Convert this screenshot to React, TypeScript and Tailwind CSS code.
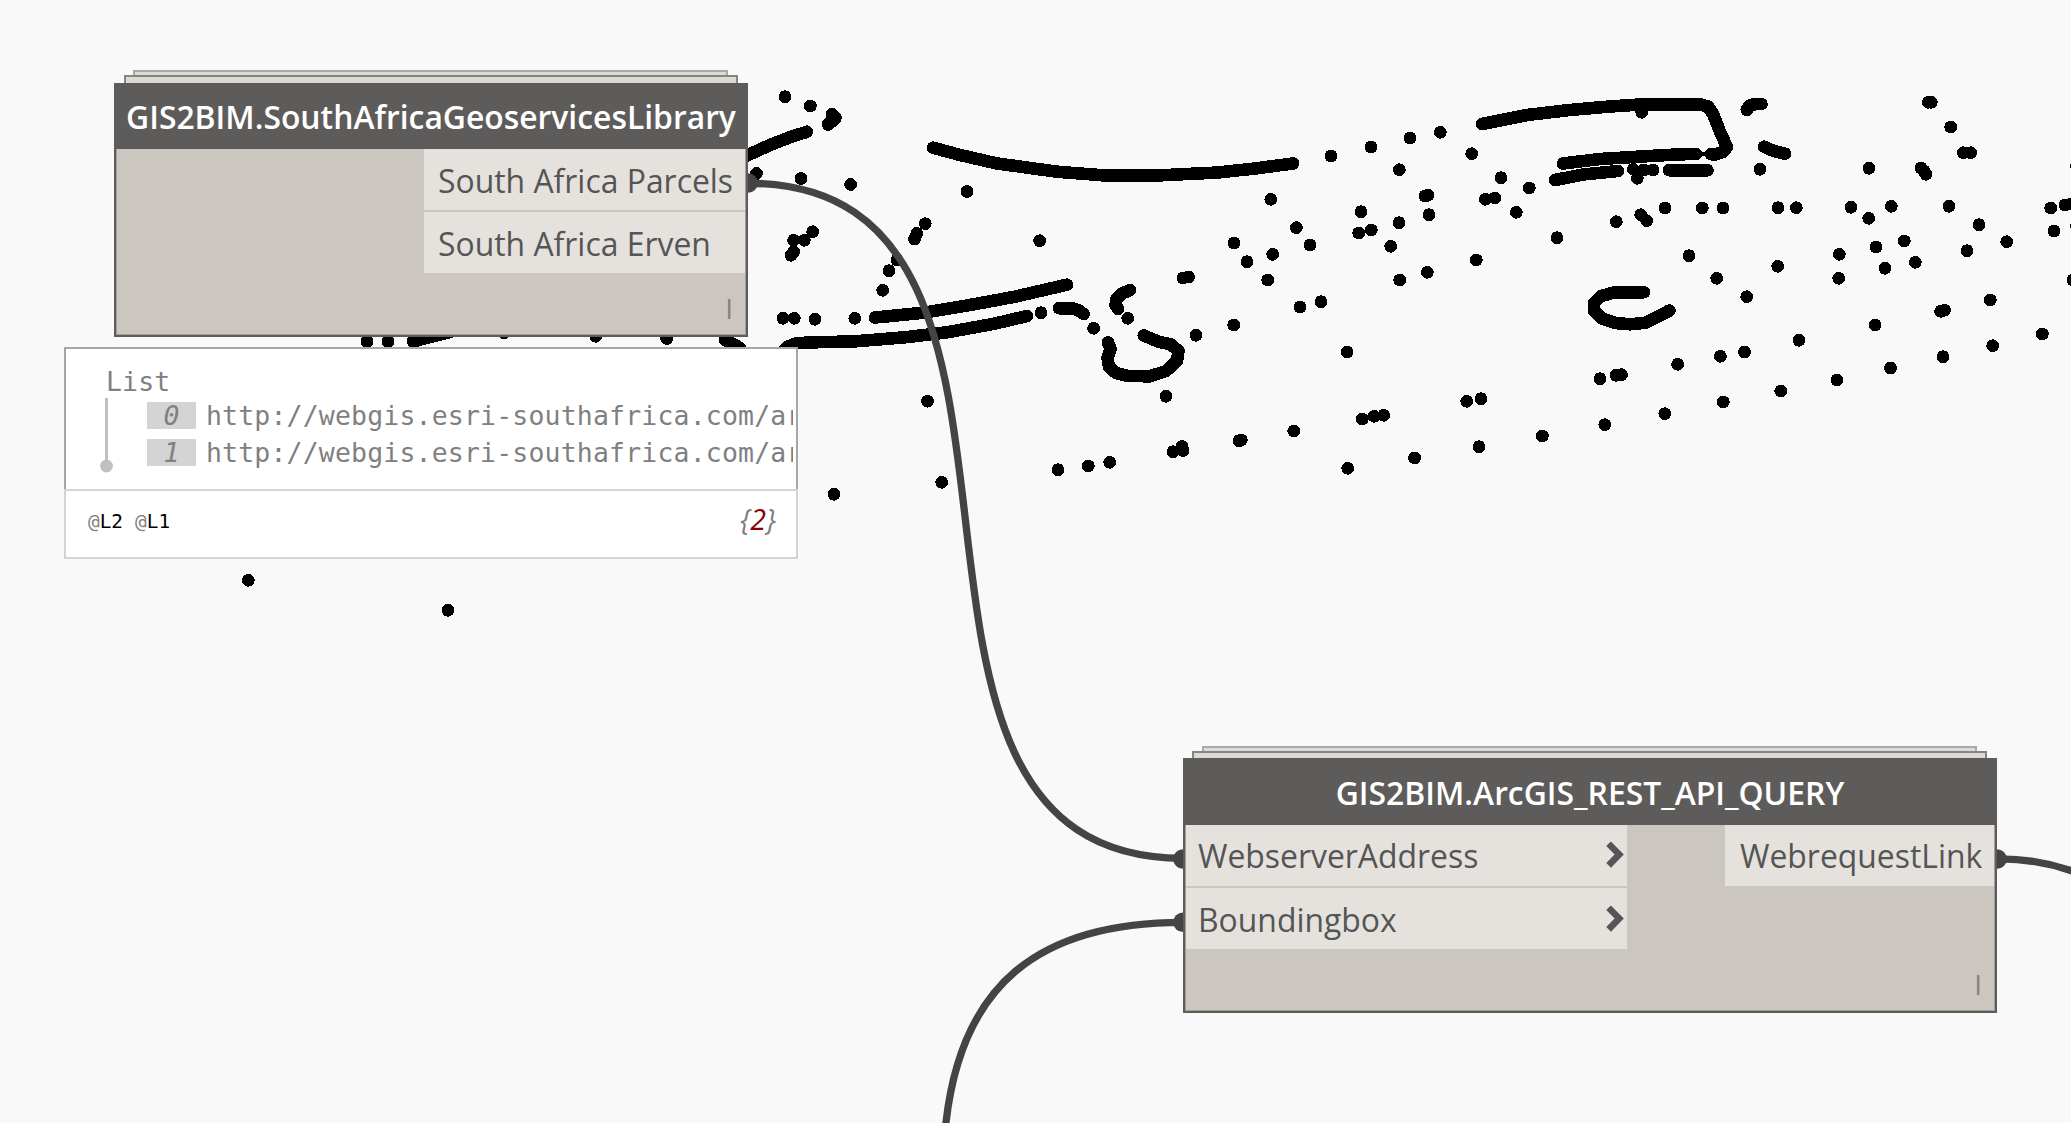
import React from "react";

const POINTS: [number, number][] = [
  [785, 96.7], [810.4, 106], [756.5, 173.5], [801, 178.5], [850.6, 184.5], [1331, 156], [967, 191.5],
  [1270.8, 199.3], [1296.4, 227.6], [1310, 245], [1234, 243], [1247, 261.7], [1272.7, 254.3], [1267.7, 280],
  [1183, 278], [1188.5, 277], [1039.6, 240.7], [925.2, 223.7], [916.8, 233.3], [914.5, 239], [812.7, 231.7],
  [793.6, 240.3], [804.3, 240.3], [793.6, 251.7], [791, 255.3], [897, 260], [889, 270.7], [882.7, 290.3],
  [1321, 301.7], [1300, 307], [783, 318.3], [794.3, 318.3], [815, 319.3], [854.8, 318.3], [1041, 312.7],
  [1093.6, 328.3], [1127.7, 318.3], [1196, 335.3], [1233.7, 325], [1166, 396.3], [927.5, 401.3],
  [941.7, 482.3], [834, 494.3], [1058, 469.7], [1088.3, 466], [1109.7, 462.3], [1173, 451.7], [1182, 446.5],
  [1183, 450.5], [1239, 440.7], [1241.3, 440], [1293.8, 431], [1371, 147], [1410, 138], [1440.3, 132.3],
  [1399.3, 169.7], [1471.7, 153.7], [1501, 177.7], [1529.3, 188], [1485.3, 199.3], [1494.7, 198],
  [1516.3, 212.3], [1425, 196], [1428, 195.3], [1429, 214.7], [1361, 211.7], [1399, 222.7], [1358.7, 233],
  [1371.3, 230], [1390.7, 246.3], [1476.3, 260], [1557, 237.7], [1427.3, 272.3], [1399.7, 280],
  [1616.3, 221.7], [1640.7, 214.7], [1646.7, 220.7], [1665, 208], [1689, 255.7], [1641.7, 112.3],
  [1633.3, 169.3], [1637.3, 178.3], [1643.5, 170], [1653, 170], [1760, 169.3], [1928.3, 102.3],
  [1931.3, 102.3], [1950.7, 127], [1963.3, 152.7], [1970.7, 152.7], [1869, 168.3], [1921, 168], [1924, 171],
  [1926, 174.3], [1702.3, 208], [1723, 208], [1778, 207.7], [1796.3, 207.7], [1851, 207.3], [1868.7, 218.3],
  [1891.3, 206.3], [1949, 206.3], [1979, 224.7], [2050.7, 208], [2065, 205], [2071, 204], [2054, 231],
  [2076.5, 166], [2076.5, 226], [2073, 280], [2006.7, 241.7], [1967, 250.7], [1904.3, 241], [1876, 247],
  [1885, 268.3], [1915.3, 262.3], [1839.3, 254.3], [1838.7, 278.3], [1777.7, 266.3], [1716.7, 278.3],
  [1746.7, 296.7], [1990.3, 300], [1940.6, 311.3], [1944.5, 310.3], [1875.2, 325], [1799, 340.3],
  [1744.5, 352], [1720.4, 356.3], [1677.6, 364.3], [1616, 375.3], [1621.5, 374.7], [1600, 378.7],
  [1347.2, 352], [1466.7, 401.3], [1481, 398.7], [1362.4, 419], [1374.2, 416.3], [1383.6, 415.3],
  [1347.7, 468.3], [1414.6, 458], [1479, 446.7], [1542.4, 436], [1604.8, 424.7], [1664.8, 413.7],
  [1723.3, 402], [1780.8, 391], [1836.9, 380], [1890.5, 368], [1943, 356.7], [1992.7, 345.7], [2042.4, 334],
  [248.3, 580.3], [448, 610.3], [367, 341.5], [388, 341.5], [504, 332.7], [595.7, 336.3], [666.7, 338.5],
  [806.7, 131.7],
];

const TRACES = [
  "M740 159 L748 155 L770 145 L793 136 L805 132.5",
  "M832 114 L835.5 118 L828 124.5 L834 120",
  "M933 147.7 L960 155 L996 163.3 L1057 171.7 L1103 175.3 L1153 175.7 L1218 172.5 L1255 168.5 L1293 163.5",
  "M875 317.5 L924 312.7 L970 305 L1015 296.7 L1067 284.7",
  "M784 350 L788 346.5 L797 343.2 L813 342.3 L853 341.5 L905 337.3 L947 332.3 L993 324 L1027 316",
  "M1059 308.3 L1073 308.3 L1079 310.5 L1083.5 314",
  "M1130 290 L1122 293.5 L1116.5 299 L1115.5 305 L1118 309",
  "M1108 342.3 L1110.5 349 L1107.5 358 L1109 367 L1116 373 L1128 376 L1150 376.3 L1166 371 L1177 361 L1178.5 351 L1171 344.5 L1158 341.5 L1143.7 335.5",
  "M1482 124 L1527 115 L1567 110.3 L1607 106.7 L1637 104.7 L1700 104.3 L1708 106.5 L1713 114 L1720 131.7 L1727 147 L1723 152 L1716 154.3 L1711 154.3",
  "M1563 163.5 L1600 159 L1650 156 L1680 154.3 L1696 154",
  "M1555 180 L1583 174.5 L1618 171",
  "M1669 170.2 H1707.5",
  "M1746.7 110 L1749 106 L1753 104.3 L1761.5 104",
  "M1764 146.7 L1770 149.5 L1778 152 L1785 153.7",
  "M413 341.5 L430 337 L450 332",
  "M725 340 L733 344 L740 348",
  "M1644 292.3 L1615 292.3 L1601 296 L1594 303 L1594 311 L1602 318.5 L1615 323 L1630 324.3 L1646 322.7 L1657 317 L1669.5 310.5",
];

function PointCloud() {
  return (
    <g fill="black" shapeRendering="crispEdges">
      {POINTS.map(([x, y], i) => (
        <circle key={i} cx={x} cy={y} r={6.4} />
      ))}
      <g fill="none" stroke="black" strokeWidth={12.6} strokeLinecap="round" strokeLinejoin="round">
        {TRACES.map((d) => (
          <path key={d} d={d} />
        ))}
      </g>
      <path d="M1698 154 H1710" stroke="black" strokeWidth={4} />
    </g>
  );
}

function Wires() {
  return (
    <g>
      <g fill="none" stroke="#444444" strokeWidth={7.3}>
        <path d="M748 183.3 C1105 183.3 826 858.3 1183 858.3" />
        <path d="M1183 922.3 C1038 922.3 960 985 945.5 1127" />
        <path d="M1997 858.8 C2022 858.5 2048 862 2078 873" />
      </g>
      <g fill="#444444">
        <circle cx={748} cy={183} r={9.8} />
        <circle cx={1183} cy={859} r={9.8} />
        <circle cx={1183} cy={922.3} r={9.8} />
        <circle cx={1997} cy={859} r={9.8} />
      </g>
    </g>
  );
}

function Port({ label, chevron = false, className = "" }: { label: string; chevron?: boolean; className?: string }) {
  return (
    <div className={"flex h-[61px] items-center justify-between bg-[#e5e2dd] text-[31.9px] leading-none text-[#555555] " + className}>
      <span className="whitespace-nowrap">{label}</span>
      {chevron && (
        <svg className="-mt-px" width="18" height="28" viewBox="0 0 18 28" fill="none" stroke="#555555" strokeWidth={6.6}>
          <path d="M2.6 2.8 L13.2 13.5 L2.6 24.4" />
        </svg>
      )}
    </div>
  );
}

function NodeShell({
  title,
  stack,
  header,
  className,
  children,
}: {
  title: string;
  stack: string;
  header: string;
  className: string;
  children: React.ReactNode;
}) {
  return (
    <section className={"absolute flex flex-col " + className}>
      <div className="ml-[19px] mr-5 h-[5px] shrink-0 border-2 border-b-0 border-[#a9a9a9] bg-[#dcdad3]" />
      <div className={"mr-[10px] shrink-0 border-2 border-b-0 border-[#858585] bg-[#dcdad3] " + stack} />
      <div className="flex min-h-0 grow flex-col border-2 border-t-0 border-[#5e5c5a] bg-[#cbc6bf]">
        <h2 className={"flex shrink-0 items-center justify-center bg-[#5e5c5a] pt-[2px] text-[31.85px] font-semibold leading-none text-white " + header}>
          <span className="whitespace-nowrap">{title}</span>
        </h2>
        <div className="flex grow flex-col border border-t-0 border-[#a39f97]">{children}</div>
      </div>
    </section>
  );
}

function Lacing() {
  return <div className="mt-auto mr-3 mb-2 self-end text-[28px] leading-[36px] text-[#86827d]">I</div>;
}

function ListRow({ index, url }: { index: number; url: string }) {
  return (
    <div className="flex h-[27px] items-center">
      <span className="flex h-[27px] w-[49px] items-center justify-center bg-[#d4d4d4] italic">{index}</span>
      <span className="ml-[10px] whitespace-nowrap">{url}</span>
    </div>
  );
}

function WatchPreview() {
  const url = "http://webgis.esri-southafrica.com/ar";
  return (
    <section className="absolute left-[64px] top-[347px] flex h-[212px] w-[734px] flex-col bg-white">
      <div className="h-[142px] border-2 border-b-0 border-[#a6a6a6] pr-[3px]">
        <div className="overflow-hidden pl-[34px] pt-[19px] font-['DejaVu_Sans_Mono',monospace] text-[26.5px] leading-[27px] tracking-[0.17px] text-[#808080]">
          <div className="ml-[6px]">List</div>
          <div className="flex pt-[2px]">
            <svg className="mr-[34px] shrink-0" width="13" height="76" viewBox="0 0 13 76" fill="#c0c0c0">
              <rect x="5" y="1" width="3" height="64" />
              <circle cx="6.5" cy="69" r="6.4" />
            </svg>
            <div className="flex flex-col gap-[10px] pt-[5px]">
              <ListRow index={0} url={url} />
              <ListRow index={1} url={url} />
            </div>
          </div>
        </div>
      </div>
      <div className="flex grow items-center justify-between border-2 border-[#d4d4d4] pl-[22px] pr-5">
        <div className="flex gap-[12px] pb-1 font-['DejaVu_Sans_Mono',monospace] text-[19.4px] leading-none text-black">
          <span><span className="text-[#808080]">@</span>L2</span>
          <span><span className="text-[#808080]">@</span>L1</span>
        </div>
        <div className="pb-[10px] text-[28.6px] italic leading-none text-[#808080]">
          {"{"}<span className="text-[#8b0000]">2</span>{"}"}
        </div>
      </div>
    </section>
  );
}

export default function App() {
  return (
    <main className="relative h-[1123px] w-[2071px] overflow-hidden bg-[#f9f9f9] font-['Open_Sans',sans-serif]">
      <svg className="block" width="2071" height="1123" viewBox="0 0 2071 1123">
        <PointCloud />
        <Wires />
      </svg>

      <NodeShell
        title="GIS2BIM.SouthAfricaGeoservicesLibrary"
        stack="ml-[10px] h-2"
        header="h-[66px]"
        className="left-[114px] top-[70px] h-[267px] w-[634px]"
      >
        <div className="flex w-[321px] flex-col gap-[2px] self-end">
          <Port label="South Africa Parcels" className="pl-[14px] pt-[2px]" />
          <Port label="South Africa Erven" className="pl-[14px] pt-[2px]" />
        </div>
        <Lacing />
      </NodeShell>

      <WatchPreview />

      <NodeShell
        title="GIS2BIM.ArcGIS_REST_API_QUERY"
        stack="ml-[9px] h-[7px]"
        header="h-[67px]"
        className="left-[1183px] top-[746px] h-[267px] w-[814px]"
      >
        <div className="flex items-start justify-between">
          <div className="flex w-[441px] flex-col gap-[2px]">
            <Port label="WebserverAddress" chevron className="pl-3 pr-[3px]" />
            <Port label="Boundingbox" chevron className="pl-3 pr-[3px] pt-[2px]" />
          </div>
          <Port label="WebrequestLink" className="w-[269px] pl-[15px]" />
        </div>
        <Lacing />
      </NodeShell>
    </main>
  );
}
